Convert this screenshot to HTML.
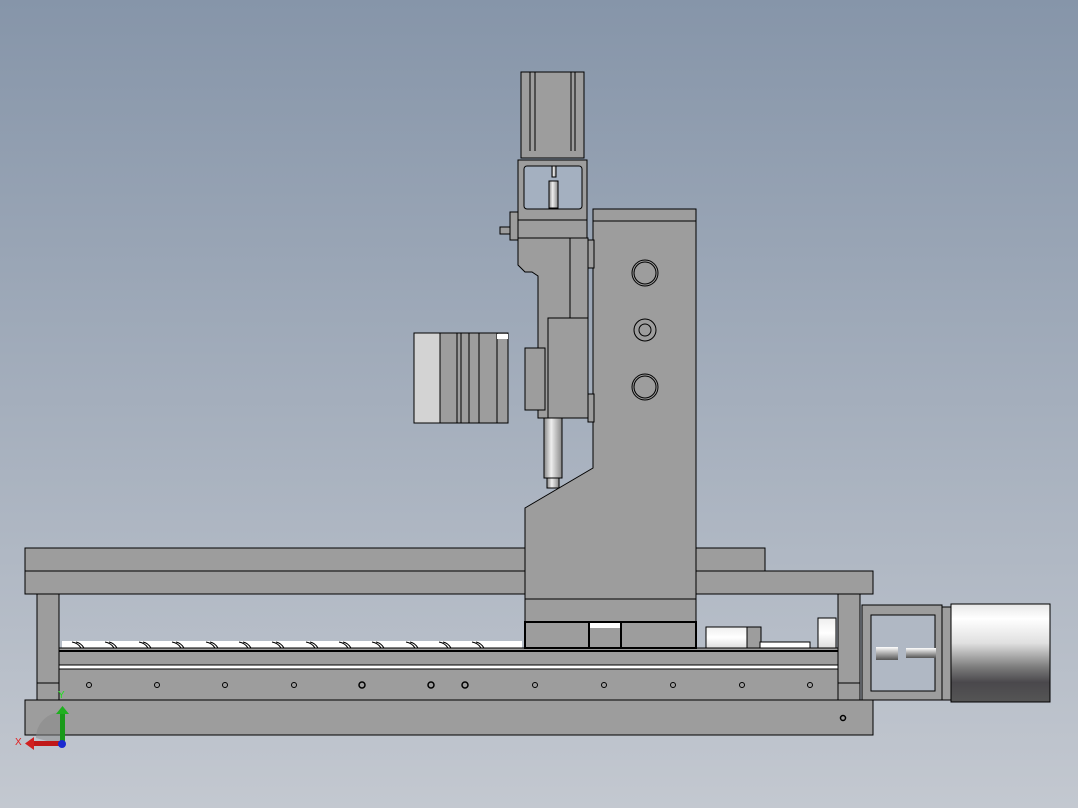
<!DOCTYPE html><html><head><style>html,body{margin:0;padding:0;width:1078px;height:808px;overflow:hidden}</style></head><body>
<svg width="1078" height="808" viewBox="0 0 1078 808" xmlns="http://www.w3.org/2000/svg" font-family="Liberation Sans, sans-serif">
<defs>
<linearGradient id="bg" x1="0" y1="0" x2="0" y2="1"><stop offset="0" stop-color="#8695a9"/><stop offset="1" stop-color="#c3c8d0"/></linearGradient>
<linearGradient id="mot" x1="0" y1="0" x2="0" y2="1"><stop offset="0" stop-color="#e8e8e8"/><stop offset="0.15" stop-color="#ffffff"/><stop offset="0.4" stop-color="#e0e0e0"/><stop offset="0.65" stop-color="#7a7a7a"/><stop offset="0.8" stop-color="#4a484c"/><stop offset="1" stop-color="#555"/></linearGradient>
<linearGradient id="shaft" x1="0" y1="0" x2="1" y2="0"><stop offset="0" stop-color="#888"/><stop offset="0.4" stop-color="#eee"/><stop offset="1" stop-color="#888"/></linearGradient>
<linearGradient id="cyl" x1="0" y1="0" x2="0" y2="1"><stop offset="0" stop-color="#eee"/><stop offset="0.5" stop-color="#fff"/><stop offset="1" stop-color="#ddd"/></linearGradient>
<linearGradient id="sh2" x1="0" y1="0" x2="0" y2="1"><stop offset="0" stop-color="#fff"/><stop offset="1" stop-color="#555"/></linearGradient>
</defs>
<rect width="1078" height="808" fill="url(#bg)"/>
<g fill="#9d9d9d" stroke="#000" stroke-width="1">
<!-- top beam -->
<rect x="25" y="548" width="740" height="23"/>
<rect x="25" y="571" width="848" height="23"/>
<!-- legs -->
<rect x="37" y="594" width="22" height="106"/>
<line x1="37" y1="683" x2="59" y2="683"/>
<rect x="838" y="594" width="22" height="106"/>
<line x1="838" y1="683" x2="860" y2="683"/>
<!-- screw -->
<rect x="62" y="641" width="460" height="7" fill="#fff" stroke="none"/>
<rect x="706" y="627" width="52" height="21" fill="url(#cyl)"/>
<rect x="747" y="627" width="14" height="21"/>
<rect x="760" y="642" width="50" height="6" fill="#fff"/>
<rect x="818" y="618" width="18" height="30" fill="url(#cyl)"/>
<!-- rail -->
<rect x="59" y="648" width="779" height="52"/>
<line x1="59" y1="651" x2="838" y2="651" stroke-width="2"/>
<rect x="59" y="665" width="779" height="4" fill="#fff" stroke-width="1"/>
<!-- base -->
<rect x="25" y="700" width="848" height="35"/>
<!-- column -->
<path d="M593 209 H696 V648 H525 V508 L593 468 Z"/>
<line x1="593" y1="221" x2="696" y2="221"/>
<line x1="525" y1="599" x2="696" y2="599"/>
<rect x="525" y="622" width="64" height="26" stroke-width="2"/>
<rect x="589" y="622" width="32" height="26" stroke-width="2"/>
<rect x="590" y="623" width="30" height="5" fill="#fff" stroke="none"/>
<rect x="621" y="622" width="75" height="26" stroke-width="2"/>
<!-- column holes -->
<circle cx="645" cy="273" r="13"/><circle cx="645" cy="273" r="11" fill="none"/>
<circle cx="645" cy="330" r="11"/><circle cx="645" cy="330" r="6" fill="none"/>
<circle cx="645" cy="387" r="13"/><circle cx="645" cy="387" r="11" fill="none"/>
<!-- z motor -->
<rect x="521" y="72" width="63" height="86"/>
<line x1="530" y1="72" x2="530" y2="151"/><line x1="535" y1="72" x2="535" y2="151"/>
<line x1="571" y1="72" x2="571" y2="151"/><line x1="575" y1="72" x2="575" y2="151"/>
<rect x="518" y="160" width="69" height="60"/>
<rect x="524" y="166" width="58" height="43" rx="3" fill="#a4b0c0"/>
<rect x="549" y="181" width="9" height="27" fill="url(#shaft)"/>
<rect x="552" y="166" width="4" height="11" fill="url(#shaft)"/>
<rect x="518" y="220" width="69" height="18"/>
<rect x="510" y="212" width="8" height="28"/>
<rect x="500" y="227" width="10" height="7"/>
<path d="M518 238 H570 V418 H538 V276 L532 272 H525 L518 265 Z"/>
<rect x="570" y="238" width="18" height="180"/>
<rect x="548" y="318" width="40" height="100"/>
<rect x="588" y="240" width="6" height="28"/><rect x="588" y="394" width="6" height="28"/>
<rect x="525" y="348" width="20" height="62"/>
<rect x="544" y="418" width="18" height="60" fill="url(#shaft)"/>
<rect x="547" y="478" width="12" height="10" fill="url(#shaft)"/>
<!-- tool -->
<rect x="414" y="333" width="94" height="90"/>
<rect x="414" y="333" width="26" height="90" fill="#d3d3d3"/>
<line x1="457" y1="333" x2="457" y2="423"/><line x1="461" y1="333" x2="461" y2="423"/>
<line x1="469" y1="333" x2="469" y2="423"/><line x1="479" y1="333" x2="479" y2="423"/>
<line x1="497" y1="333" x2="497" y2="423"/>
<rect x="497" y="334" width="11" height="5" fill="#fff" stroke="none"/>
<!-- right bracket -->
<rect x="862" y="605" width="80" height="95"/>
<rect x="871" y="615" width="64" height="76" fill="#b0b8c4"/>
<rect x="876" y="647" width="22" height="13" fill="url(#sh2)" stroke="none"/>
<rect x="906" y="648" width="30" height="10" fill="url(#sh2)" stroke="none"/>
<rect x="942" y="607" width="9" height="93"/>
<rect x="951" y="604" width="99" height="98" fill="url(#mot)"/>
</g>
<g fill="none" stroke="#000" stroke-width="1">
<g id="th"><path d="M72 642 q6 1 9 6 M76 642 q5 1 8 6"/></g>
<use href="#th" x="33"/><use href="#th" x="67"/><use href="#th" x="100"/><use href="#th" x="134"/><use href="#th" x="167"/><use href="#th" x="200"/><use href="#th" x="234"/><use href="#th" x="267"/><use href="#th" x="300"/><use href="#th" x="334"/><use href="#th" x="367"/><use href="#th" x="400"/>
<circle cx="89" cy="685" r="2.5"/><circle cx="157" cy="685" r="2.5"/><circle cx="225" cy="685" r="2.5"/><circle cx="294" cy="685" r="2.5"/><circle cx="362" cy="685" r="3" stroke-width="1.5"/><circle cx="431" cy="685" r="3" stroke-width="1.5"/><circle cx="465" cy="685" r="3" stroke-width="1.5"/><circle cx="535" cy="685" r="2.5"/><circle cx="604" cy="685" r="2.5"/><circle cx="673" cy="685" r="2.5"/><circle cx="742" cy="685" r="2.5"/><circle cx="810" cy="685" r="2.5"/><circle cx="843" cy="718" r="2.5" stroke-width="1.5"/>
</g>
<!-- triad -->
<path d="M62 705 V742 H28" fill="none" stroke="#999" stroke-width="0"/>
<path d="M36 738 a26 26 0 0 1 26 -26 V745 Z" fill="#888" opacity="0.5"/>
<rect x="60" y="712" width="5" height="30" fill="#1a9a1a"/><path d="M56 714 L62.5 706 L69 714 Z" fill="#1fb01f"/>
<rect x="32" y="741" width="30" height="5" fill="#c01818"/><path d="M34 737 L25 743.5 L34 750 Z" fill="#d02020"/>
<circle cx="62" cy="744" r="4" fill="#1a2ad0"/>
<text x="58" y="698" font-size="10" fill="#20e020">Y</text>
<text x="15" y="745" font-size="10" fill="#e02020">X</text>
</svg>
</body></html>
